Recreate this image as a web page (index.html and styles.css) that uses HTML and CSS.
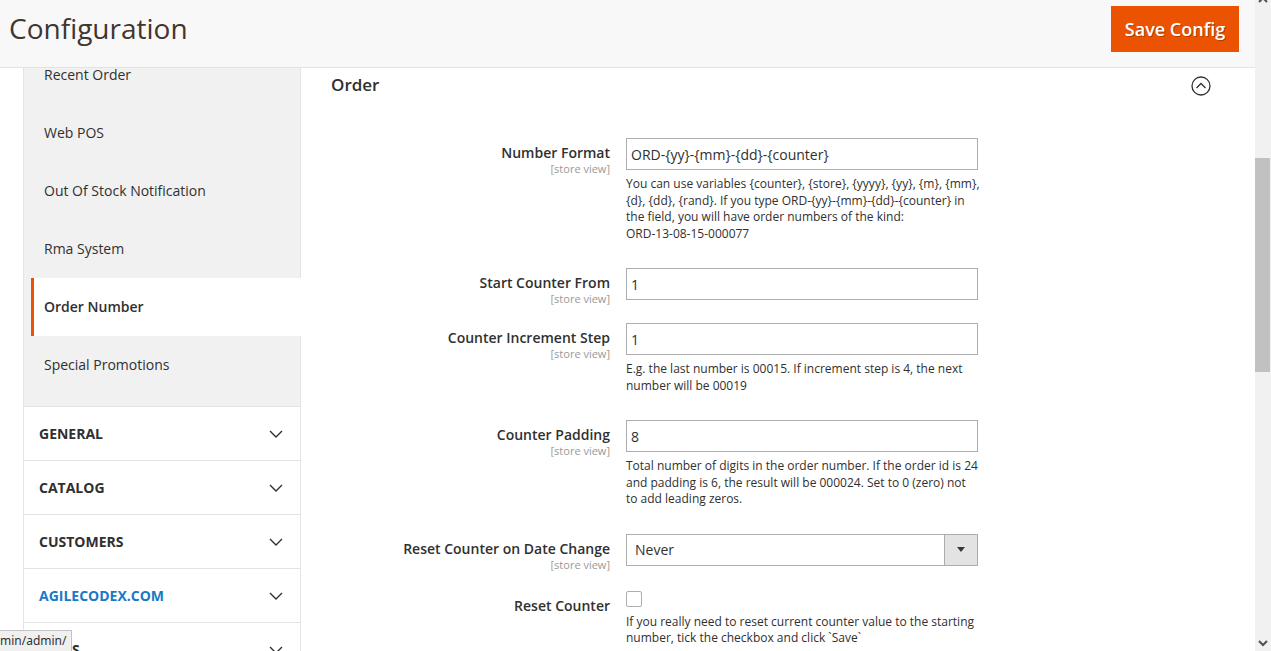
FILE: index.html
```html
<!DOCTYPE html>
<html lang="en">
<head>
<meta charset="utf-8">
<title>Configuration</title>
<link rel="stylesheet" href="styles.css">
</head>
<body>
<div class="window">
  <div class="page">
    <header class="page-header">
      <h1 class="page-title">Configuration</h1>
      <button class="btn-primary" type="button">Save Config</button>
    </header>
    <div class="page-body">
      <aside class="nav">
        <ul class="nav-group">
          <li class="nav-item">Recent Order</li>
          <li class="nav-item">Web POS</li>
          <li class="nav-item">Out Of Stock Notification</li>
          <li class="nav-item">Rma System</li>
          <li class="nav-item active">Order Number</li>
          <li class="nav-item">Special Promotions</li>
        </ul>
        <div class="nav-section"><span>GENERAL</span><svg class="chev" width="14" height="8" viewBox="0 0 14 8"><path d="M1 1l6 6 6-6" fill="none" stroke="#303030" stroke-width="1.4"/></svg></div>
        <div class="nav-section"><span>CATALOG</span><svg class="chev" width="14" height="8" viewBox="0 0 14 8"><path d="M1 1l6 6 6-6" fill="none" stroke="#303030" stroke-width="1.4"/></svg></div>
        <div class="nav-section"><span>CUSTOMERS</span><svg class="chev" width="14" height="8" viewBox="0 0 14 8"><path d="M1 1l6 6 6-6" fill="none" stroke="#303030" stroke-width="1.4"/></svg></div>
        <div class="nav-section link"><span>AGILECODEX.COM</span><svg class="chev" width="14" height="8" viewBox="0 0 14 8"><path d="M1 1l6 6 6-6" fill="none" stroke="#303030" stroke-width="1.4"/></svg></div>
        <div class="nav-section"><span>SALES</span><svg class="chev" width="14" height="8" viewBox="0 0 14 8"><path d="M1 1l6 6 6-6" fill="none" stroke="#303030" stroke-width="1.4"/></svg></div>
      </aside>
      <main class="content">
        <div class="section-head">
          <h2 class="section-title">Order</h2>
          <svg class="collapse" width="20" height="20" viewBox="0 0 20 20"><circle cx="10" cy="10" r="9" fill="none" stroke="#303030" stroke-width="1.3"/><path d="M5.5 12l4.5-4.5 4.5 4.5" fill="none" stroke="#303030" stroke-width="1.3"/></svg>
        </div>
        <div class="form">
          <div class="row">
            <div class="label"><span class="label-text">Number Format</span><span class="scope">[store view]</span></div>
            <div class="field">
              <input class="input" type="text" value="ORD-{yy}-{mm}-{dd}-{counter}">
              <p class="note note-wide">You can use variables {counter}, {store}, {yyyy}, {yy}, {m}, {mm}, {d}, {dd}, {rand}. If you type ORD-{yy}-{mm}-{dd}-{counter} in the field, you will have order numbers of the kind: <span class="nowrap">ORD-13-08-15-000077</span></p>
            </div>
          </div>
          <div class="row">
            <div class="label"><span class="label-text">Start Counter From</span><span class="scope">[store view]</span></div>
            <div class="field">
              <input class="input" type="text" value="1">
            </div>
          </div>
          <div class="row">
            <div class="label"><span class="label-text">Counter Increment Step</span><span class="scope">[store view]</span></div>
            <div class="field">
              <input class="input" type="text" value="1">
              <p class="note">E.g. the last number is 00015. If increment step is 4, the next number will be 00019</p>
            </div>
          </div>
          <div class="row">
            <div class="label"><span class="label-text">Counter Padding</span><span class="scope">[store view]</span></div>
            <div class="field">
              <input class="input" type="text" value="8">
              <p class="note">Total number of digits in the order number. If the order id is 24 and padding is 6, the result will be 000024. Set to 0 (zero) not to add leading zeros.</p>
            </div>
          </div>
          <div class="row">
            <div class="label"><span class="label-text">Reset Counter on Date Change</span><span class="scope">[store view]</span></div>
            <div class="field">
              <div class="select"><span class="select-value">Never</span><span class="select-arrow"></span></div>
            </div>
          </div>
          <div class="row row-check">
            <div class="label"><span class="label-text">Reset Counter</span></div>
            <div class="field">
              <span class="checkbox"></span>
              <p class="note">If you really need to reset current counter value to the starting number, tick the checkbox and click `Save`</p>
            </div>
          </div>
        </div>
      </main>
    </div>
  </div>
  <div class="scrollbar">
    <svg class="sb-up" width="16" height="8" viewBox="0 0 16 8"><path d="M4 6l4-4 4 4" fill="none" stroke="#505050" stroke-width="2"/></svg>
    <div class="sb-thumb"></div>
    <svg class="sb-down" width="16" height="8" viewBox="0 0 16 8"><path d="M4 2l4 4 4-4" fill="none" stroke="#505050" stroke-width="2"/></svg>
  </div>
</div>
<div class="status">min/admin/</div>
</body>
</html>
```

FILE: styles.css
```css
* { box-sizing: border-box; }
html, body { margin: 0; padding: 0; height: 100%; overflow: hidden; }
body {
  font-family: "Open Sans", "Liberation Sans", sans-serif;
  color: #303030;
  background: #fff;
}
.window { display: flex; height: 651px; overflow: hidden; }
.page { flex: 1; display: flex; flex-direction: column; overflow: hidden; min-width: 0; }

.page-header {
  height: 68px;
  flex: none;
  background: #f8f8f8;
  border-bottom: 1px solid #e3e3e3;
  display: flex;
  justify-content: space-between;
  align-items: flex-start;
  padding: 6px 16px 0 9px;
  position: relative;
  z-index: 2;
}
.page-title {
  margin: -1px 0 0;
  font-size: 28px;
  font-weight: 400;
  line-height: 46px;
  color: #41362f;
}
.btn-primary {
  width: 128px;
  height: 46px;
  background: #eb5202;
  border: 1px solid #eb5202;
  color: #fff;
  font-family: "Open Sans", sans-serif;
  font-size: 18px;
  font-weight: 600;
  text-shadow: 1px 1px 0 rgba(0,0,0,.25);
  padding: 0;
}

.page-body { flex: 1; display: flex; overflow: hidden; }

.nav {
  flex: none;
  width: 278px;
  margin-left: 23px;
  margin-top: -21px;
  border-left: 1px solid #e3e3e3;
  border-right: 1px solid #e3e3e3;
}
.nav-group {
  list-style: none;
  margin: 0;
  padding: 0 0 11px;
  background: #f1f1f1;
  border-bottom: 1px solid #e3e3e3;
}
.nav-item {
  margin-left: 7px;
  border-left: 3px solid transparent;
  padding: 19px 10px;
  font-size: 14px;
  line-height: 20px;
}
.nav-item:first-child { padding-top: 18px; }
.nav-item:last-child { padding-bottom: 20px; }
.nav-item.active {
  border-left-color: #eb5202;
  background: #fff;
  font-weight: 600;
  margin-right: -1px;
}
.nav-section {
  height: 54px;
  border-bottom: 1px solid #e3e3e3;
  display: flex;
  align-items: center;
  justify-content: space-between;
  padding: 0 17px 0 15px;
  font-size: 14px;
  font-weight: 700;
  color: #303030;
  background: #fff;
}
.nav-section.link { color: #1979c3; }

.content {
  flex: 1;
  min-width: 0;
  padding: 5px 44px 0 30px;
}
.section-head {
  display: flex;
  justify-content: space-between;
  align-items: center;
}
.section-title {
  margin: 0;
  font-size: 17px;
  font-weight: 600;
  line-height: 24px;
}
.collapse { margin-top: 2px; }

.form {
  margin-top: 41px;
  display: flex;
  flex-direction: column;
  gap: 19px;
}
.row {
  display: grid;
  grid-template-columns: 279px 352px;
  column-gap: 16px;
}
.label {
  text-align: right;
  padding-top: 5px;
}
.label-text {
  display: block;
  font-size: 14px;
  font-weight: 600;
  line-height: 20px;
}
.scope {
  display: block;
  font-size: 11px;
  line-height: 11px;
  color: #999;
}
.row-check .label { padding-top: 7px; }

.input {
  display: block;
  width: 100%;
  height: 32px;
  border: 1px solid #adadad;
  padding: 0 4px;
  font-family: "Open Sans", sans-serif;
  font-size: 14px;
  color: #303030;
  background: #fff;
}
.note {
  margin: 6px 0 7px;
  font-size: 12px;
  line-height: 16.5px;
}
.note-wide { margin-right: -6px; }
.nowrap { white-space: nowrap; }
.select {
  display: flex;
  height: 32px;
  border: 1px solid #adadad;
  font-size: 14px;
}
.select-value { flex: 1; padding: 0 8px; line-height: 30px; }
.select-arrow {
  width: 33px;
  background: #e3e3e3;
  border-left: 1px solid #adadad;
  display: flex;
  align-items: center;
  justify-content: center;
}
.select-arrow::after {
  content: "";
  border-left: 4px solid transparent;
  border-right: 4px solid transparent;
  border-top: 5px solid #41362f;
}
.checkbox {
  display: block;
  width: 16px;
  height: 16px;
  margin-top: 2px;
  border: 1px solid #adadad;
  border-radius: 2px;
  background: #fff;
}
.row-check .note { margin-top: 7px; }

.scrollbar {
  flex: none;
  width: 16px;
  background: #f1f1f1;
  display: flex;
  flex-direction: column;
}
.sb-up { display: block; margin-top: -4px; }
.sb-thumb { height: 214px; margin: 154px 1px 0 0; background: #c1c1c1; }
.sb-down { display: block; margin-top: auto; margin-bottom: 4px; }

.status {
  position: absolute;
  left: 0;
  bottom: 0;
  height: 21px;
  padding: 1px 4px 0 0;
  background: #f0f0f0;
  border-top: 1px solid #c3c3c3;
  border-right: 1px solid #c3c3c3;
  font-family: "Noto Sans", "Open Sans", sans-serif;
  font-size: 12px;
  line-height: 18px;
  color: #303030;
  z-index: 3;
}
```
